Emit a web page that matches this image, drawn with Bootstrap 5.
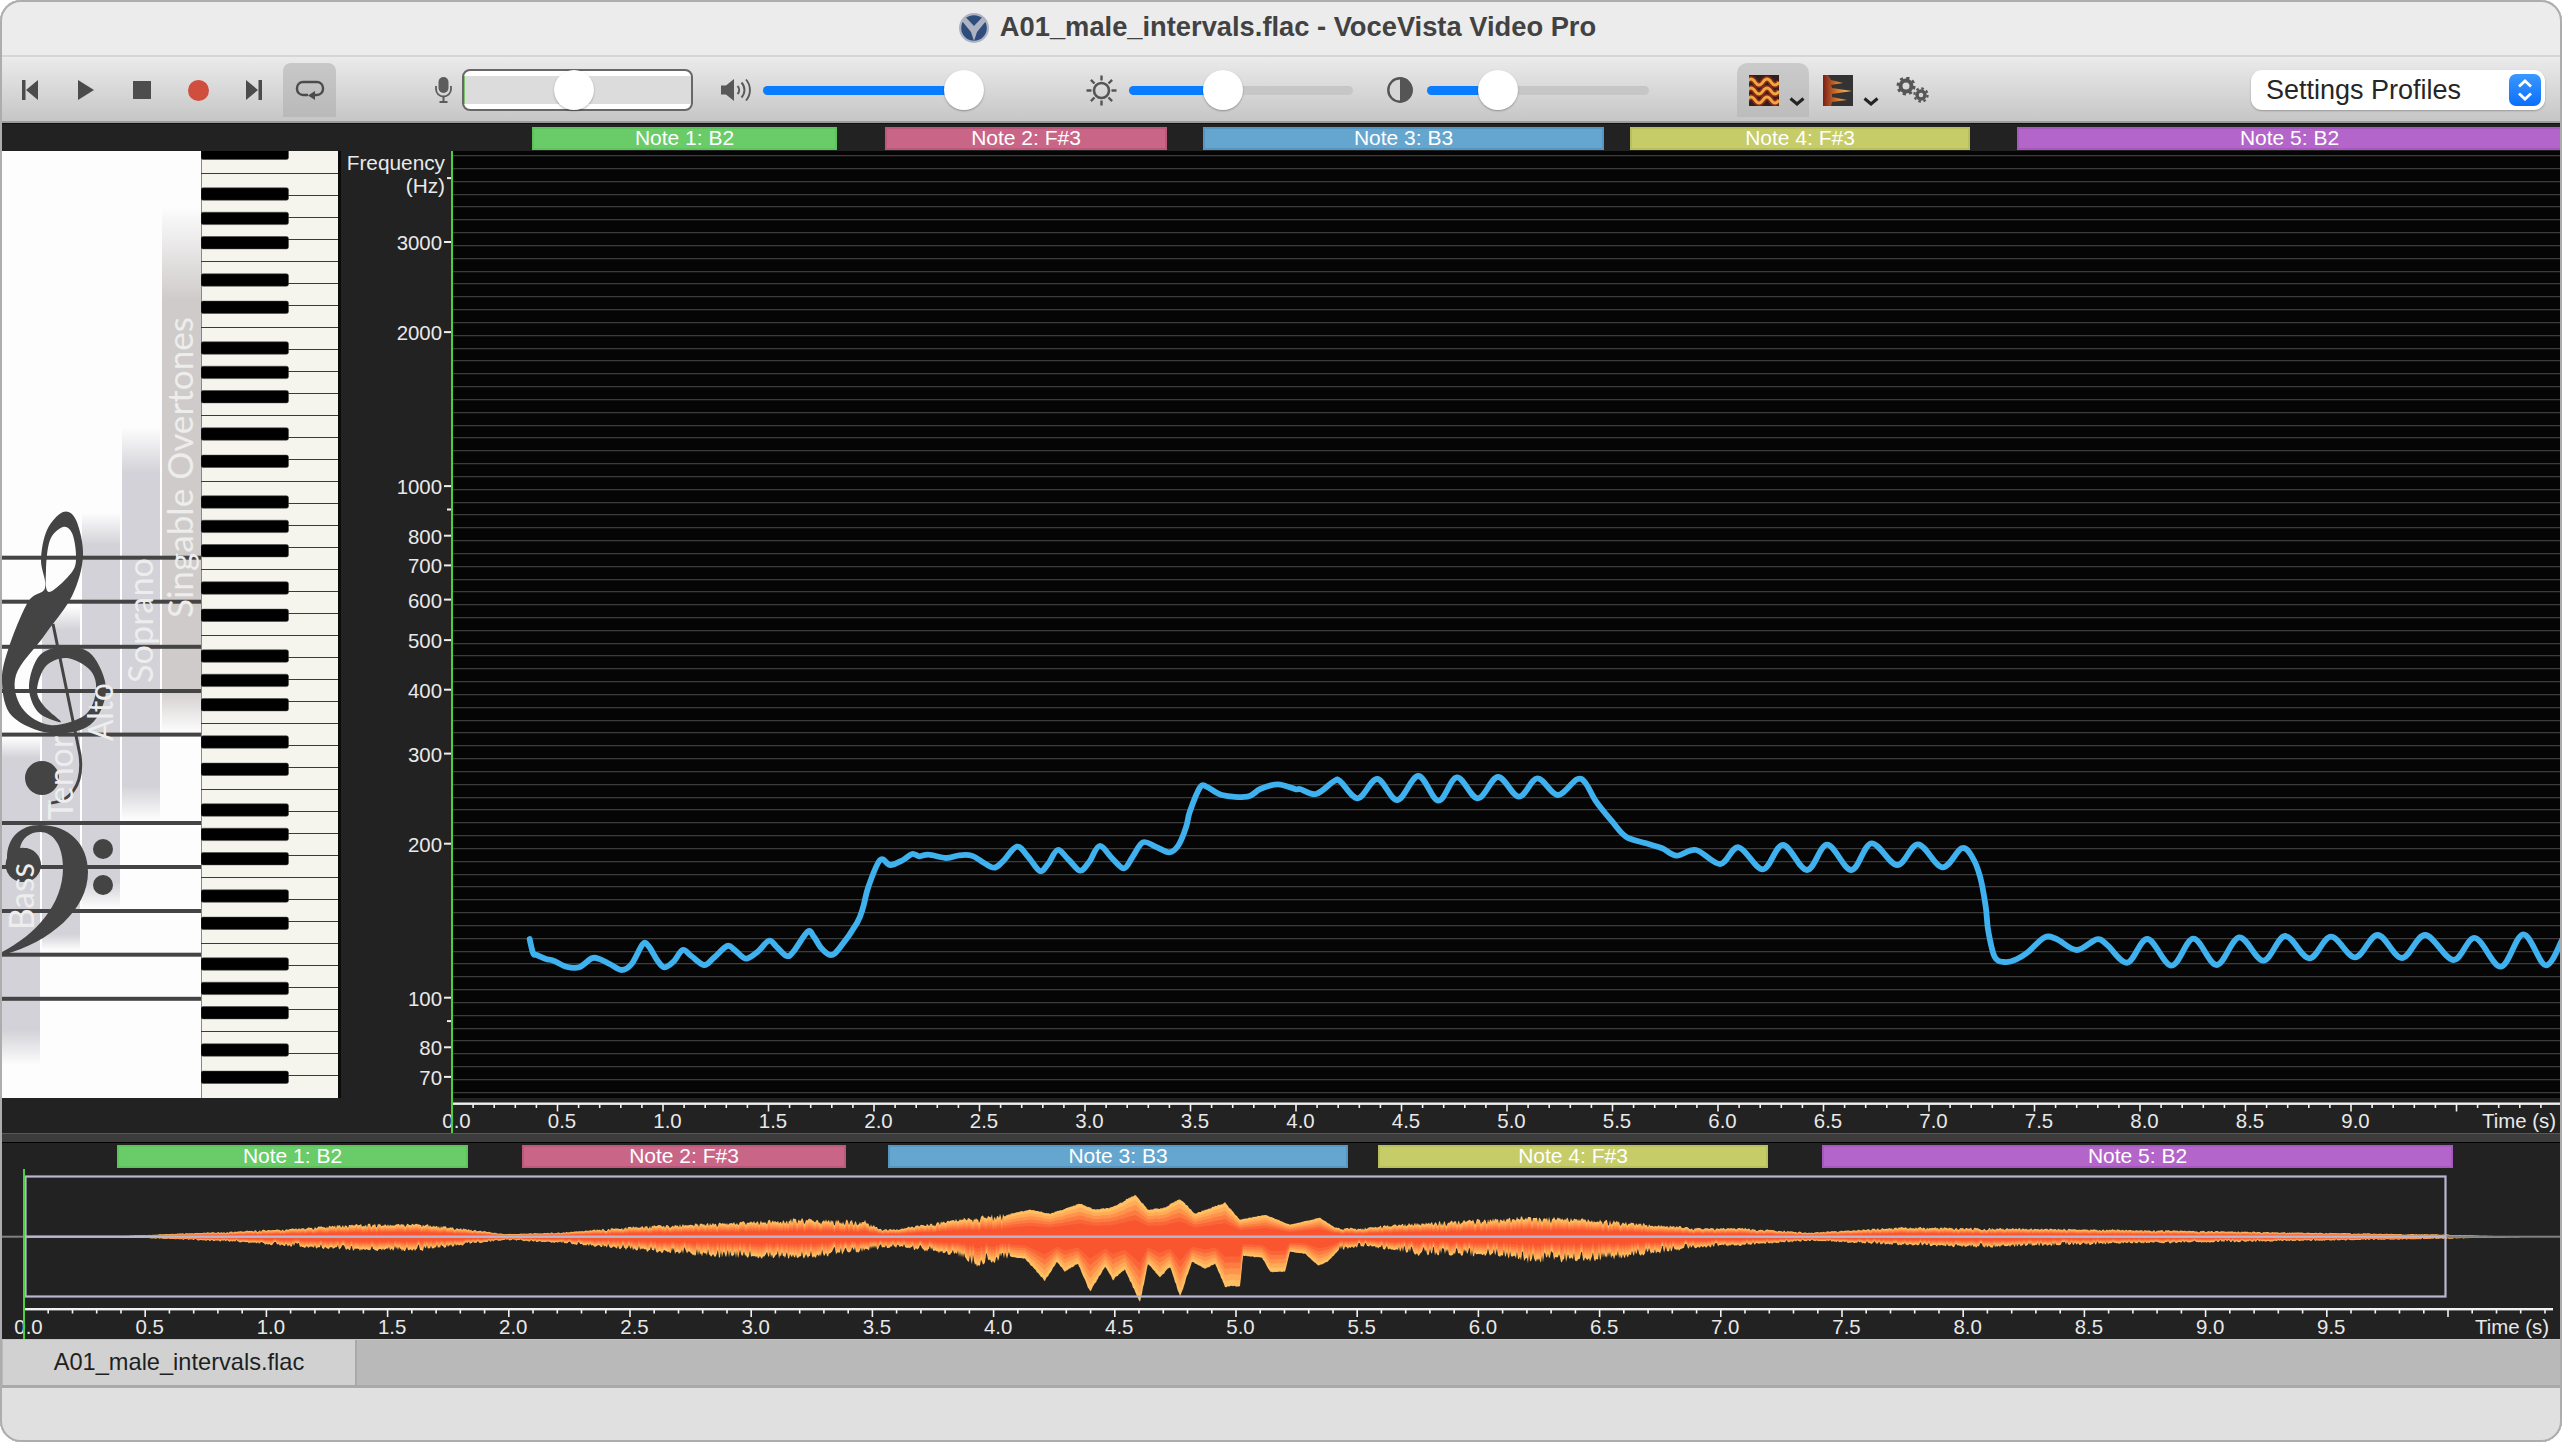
<!DOCTYPE html>
<html lang="en">
<head>
<meta charset="utf-8">
<title>A01_male_intervals.flac - VoceVista Video Pro</title>
<link rel="stylesheet" href="https://cdn.jsdelivr.net/npm/bootstrap@5.3.0/dist/css/bootstrap.min.css">
<style>
html,body{margin:0;width:2562px;height:1442px;background:#fff;overflow:hidden;font-family:"Liberation Sans",Arial,sans-serif}
.vv-win{width:2562px;height:1442px;border-radius:21px;overflow:hidden;position:relative;background:#222}
.vv-win::after{content:"";position:absolute;inset:0;border:2px solid #adadad;border-radius:21px;pointer-events:none}
.vv-title{height:57px;background:#ececec;border-bottom:2px solid #d6d6d6;color:#424242;font-size:27.300px;font-weight:700;padding-right:7px}
.vv-title svg{margin-right:11px}
.vv-tools{height:66px;background:linear-gradient(#ebebeb,#c6c6c6);border-bottom:2px solid #9c9c9c;padding-top:2px}
.tb-btn{line-height:0}
.tb-btn:active,.tb-btn:hover{border-color:transparent}
.m22{margin-left:22px}.m40{margin-left:40px}.m39{margin-left:39px}.m36{margin-left:36.5px}.m37{margin-left:37.5px}.m21{margin-left:21px}
.m99{margin-left:99px}.m10{margin-left:10px}.m28{margin-left:28px}.m102{margin-left:102px}.m12{margin-left:12px}.m34{margin-left:34px}.m14{margin-left:14px}.m88{margin-left:88px}.m17{margin-left:17px}
.tb-on{width:53px;height:54px;background:linear-gradient(#c8c8c8,#b9b9b9);border-radius:8px 8px 0 0}
.tb-view{height:54px;padding:12px 0 0;gap:10px}
.tb-view svg{flex:none}
.tb-on2{width:72px;background:linear-gradient(#cbcbcb,#bcbcbc);border-radius:10px 10px 0 0;padding-left:12px}
.tb-chev{margin-top:22px}
.vv-meter{width:231px;height:42px;border:2px solid #686868;border-radius:8px;background:#fff;padding:5px 0}
.vv-meterband{height:28px;background:#dcdcdc;border-left:1px solid #7cc46c}
.vv-sl{height:40px}
.w221{width:221px}.w224{width:224px}.w222{width:222px}
.vv-track{height:9px;background:#c6c6c6;border-radius:5px;top:15.5px}
.vv-fill{background:#0a7cff}
.vv-thumb{position:absolute;top:0;width:40px;height:40px;border-radius:50%;background:#fff;box-shadow:0 1px 2px rgba(0,0,0,.3)}
.vv-select{width:294px;margin-right:17px}
.vv-select .form-select{height:40px;border:0;border-radius:11px;background-image:none;padding:0 0 0 15px;font-size:27px;color:#262626;box-shadow:0 1px 2px rgba(0,0,0,.25);font-family:"Liberation Sans",Arial,sans-serif}
.vv-step{position:absolute;right:4px;top:4px}
.vv-lane{height:28px;background:#222;border-top:1px solid #111;padding-top:3px}
.vv-lane2{height:26px;background:#222;padding-top:2px}
.vv-chip{height:23px;border:2px solid;color:#fff;font-size:21px;line-height:18px;text-align:center;flex:none;white-space:nowrap;overflow:hidden}
.vv-n1{background:#6acb69;border-color:#5cc45a}
.vv-n2{background:#c96587;border-color:#bc587b}
.vv-n3{background:#65a6cf;border-color:#5796c2}
.vv-n4{background:#c5cc68;border-color:#b9c05b}
.vv-n5{background:#b365c9;border-color:#a758be}
.vv-plotrow{height:947px}
.vv-plotrow svg,.vv-strip svg{display:block}
.vv-strip{height:35px;background:#222}
.vv-split{height:10px;background:#3c3c3c;border-top:1px solid #585858;border-bottom:1px solid #000}
.vv-wave{height:170px;background:#222}
.vv-tabs{height:49px;background:#b9b9b9;border-bottom:3px solid #a9a9a9;border-top:1px solid #c4c4c4;padding-left:3px}
.vv-tab{width:354px;background:#d1d1d1;color:#1f1f1f;font-size:23.6px;border-right:2px solid #a9a9a9}
.vv-status{height:54px;background:#e0e0e0}
svg text{font-family:"Liberation Sans",Arial,sans-serif;font-size:20.400px;fill:#e9e9e9}
svg .vv-voice{font-family:Lato,"Open Sans",sans-serif;font-size:34px;font-weight:400;fill:#ededed}
svg .vv-fq{font-size:20.800px}
</style>
</head>
<body>
<div class="vv-win d-flex flex-column">
  <div class="vv-title d-flex align-items-center justify-content-center flex-none">
    <svg width="30" height="30" viewBox="-15 -15 30 30"><circle r="15" fill="#adb3c1"/><circle r="12.800" fill="#2f4d7c"/><polygon points="-12,-7 -8.500,-11 0,-2 8.500,-11 12,-7 3,4 0,13 -3,4" fill="#adb3c1"/></svg>
    <span>A01_male_intervals.flac - VoceVista Video Pro</span>
  </div>

  <div class="vv-tools d-flex align-items-center">
    <button class="btn tb-btn p-0 border-0 m22" aria-label="Previous"><svg width="16" height="20" viewBox="0 0 16 20"><rect width="3.500" height="20" fill="#4b4b4b"/><polygon points="16,0 16,20 4,10" fill="#4b4b4b"/></svg></button>
    <button class="btn tb-btn p-0 border-0 m40" aria-label="Play"><svg width="16" height="20" viewBox="0 0 16 20"><polygon points="0,0 0,20 16,10" fill="#4b4b4b"/></svg></button>
    <button class="btn tb-btn p-0 border-0 m39" aria-label="Stop"><svg width="18" height="18" viewBox="0 0 18 18"><rect width="18" height="18" fill="#4d4d4d"/></svg></button>
    <button class="btn tb-btn p-0 border-0 m36" aria-label="Record"><svg width="21" height="21" viewBox="0 0 21 21"><circle cx="10.500" cy="10.500" r="10.500" fill="#cf4e3e"/></svg></button>
    <button class="btn tb-btn p-0 border-0 m37" aria-label="Next"><svg width="16" height="20" viewBox="0 0 16 20"><polygon points="0,0 0,20 12,10" fill="#4b4b4b"/><rect x="12.500" width="3.500" height="20" fill="#4b4b4b"/></svg></button>
    <button class="btn tb-btn p-0 border-0 m21 tb-on d-flex align-items-center justify-content-center" aria-label="Loop"><svg width="30" height="20" viewBox="0 0 30 20"><path d="M13 15H8a6 6 0 0 1-6-6V8a6 6 0 0 1 6-6h14a6 6 0 0 1 6 6v1a6 6 0 0 1-6 6h-3" fill="none" stroke="#4b4b4b" stroke-width="2.400"/><polygon points="20,11 20,20 13,15.500" fill="#4b4b4b"/></svg></button>

    <svg class="m99" width="17" height="26" viewBox="0 0 17 26"><rect x="3.500" width="10" height="16" rx="5" fill="#5c5c5c"/><path d="M1 9v3a7.500 7.500 0 0 0 15 0V9" fill="none" stroke="#5c5c5c" stroke-width="1.800"/><path d="M8.500 19.500V25M4.500 25h8" stroke="#5c5c5c" stroke-width="2" fill="none"/></svg>
    <div class="vv-meter m10 position-relative"><div class="vv-meterband"></div><span class="vv-thumb" style="left:90px;top:-1px"></span></div>
    <svg class="m28" width="32" height="24" viewBox="0 0 32 24"><rect y="7.500" width="6" height="9" fill="#585858"/><polygon points="5,7.500 13,1 13,23 5,16.500" fill="#585858"/><path d="M16.500 8a5.500 5.500 0 0 1 0 8M20.500 4.500a11 11 0 0 1 0 15M25 1.500a16 16 0 0 1 0 21" fill="none" stroke="#585858" stroke-width="1.900"/></svg>
    <div class="vv-sl w221 m10 position-relative"><div class="progress vv-track position-absolute w-100"><div class="progress-bar vv-fill" style="width:201px"></div></div><span class="vv-thumb" style="left:181px"></span></div>

    <svg class="m102" width="31" height="31" viewBox="-15.500 -15.500 31 31"><circle r="7.500" fill="none" stroke="#555" stroke-width="2.600"/><g stroke="#555" stroke-width="2.400"><path d="M0-15V-10M0 10V15M-15 0H-10M10 0H15M-10.600-10.600L-7-7M7 7L10.600 10.600M-10.600 10.600L-7 7M7-7L10.600-10.600"/></g></svg>
    <div class="vv-sl w224 m12 position-relative"><div class="progress vv-track position-absolute w-100"><div class="progress-bar vv-fill" style="width:94px"></div></div><span class="vv-thumb" style="left:74px"></span></div>
    <svg class="m34" width="26" height="26" viewBox="-13 -13 26 26"><circle r="11.700" fill="#d6d6d6" stroke="#555" stroke-width="2.400"/><path d="M0-12.500a12.500 12.500 0 0 1 0 25z" fill="#555"/></svg>
    <div class="vv-sl w222 m14 position-relative"><div class="progress vv-track position-absolute w-100"><div class="progress-bar vv-fill" style="width:71px"></div></div><span class="vv-thumb" style="left:51px"></span></div>

    <button class="btn tb-btn border-0 m88 tb-view tb-on2 d-flex align-items-start" aria-label="Spectrogram view">
      <svg width="30" height="31" viewBox="0 0 30 31"><rect width="30" height="31" fill="#33201d"/><g fill="none"><g stroke="#8d2a1d" stroke-width="6"><path d="M-2 7q4-6 8 0t8 0 8 0 8 0"/><path d="M-2 16q4-6 8 0t8 0 8 0 8 0"/><path d="M-2 25q4-6 8 0t8 0 8 0 8 0"/></g><g stroke="#efa83c" stroke-width="3"><path d="M-2 7q4-6 8 0t8 0 8 0 8 0"/><path d="M-2 16q4-6 8 0t8 0 8 0 8 0"/><path d="M-2 25q4-6 8 0t8 0 8 0 8 0"/></g></g></svg>
      <svg class="tb-chev" width="16" height="9" viewBox="0 0 16 9"><path d="M1.500 1.500 8 7l6.500-5.500" fill="none" stroke="#232323" stroke-width="3"/></svg>
    </button>
    <button class="btn tb-btn border-0 m14 tb-view d-flex align-items-start" aria-label="Spectrum view">
      <svg width="30" height="31" viewBox="0 0 30 31"><defs><linearGradient id="fl" x1="0" x2="1" y1="0" y2="0"><stop offset="0" stop-color="#7a1f18"/><stop offset=".45" stop-color="#d0702a"/><stop offset="1" stop-color="#f6d070"/></linearGradient></defs><rect width="30" height="31" fill="#333"/><path d="M0 0H5L8 5 20 8 8 10 9 13 29 16 9 19 9 22 24 25 9 27 8 31H0Z" fill="url(#fl)"/></svg>
      <svg class="tb-chev" width="16" height="9" viewBox="0 0 16 9"><path d="M1.500 1.500 8 7l6.500-5.500" fill="none" stroke="#232323" stroke-width="3"/></svg>
    </button>
    <svg class="m17" width="33" height="26" viewBox="0 0 33 26"><g fill="none" stroke="#565656"><circle cx="10" cy="9" r="5.500" stroke-width="4"/><circle cx="10" cy="9" r="8.200" stroke-width="2.600" stroke-dasharray="3.200 3.240"/><circle cx="25" cy="18" r="4" stroke-width="3.400"/><circle cx="25" cy="18" r="6.600" stroke-width="2.200" stroke-dasharray="2.600 2.590"/></g></svg>

    <div class="vv-select ms-auto position-relative">
      <select class="form-select" aria-label="Settings Profiles"><option>Settings Profiles</option></select>
      <svg class="vv-step" width="32" height="32" viewBox="0 0 32 32"><defs><linearGradient id="st" x1="0" x2="0" y1="0" y2="1"><stop offset="0" stop-color="#3a98ff"/><stop offset="1" stop-color="#0a6ffc"/></linearGradient></defs><rect width="32" height="32" rx="7" fill="url(#st)"/><path d="M10 12.500 16 7l6 5.500M10 19.500 16 25l6-5.500" fill="none" stroke="#fff" stroke-width="2.800"/></svg>
    </div>
  </div>

  <div class="vv-lane d-flex">
    <div class="vv-chip vv-n1" style="margin-left:532px;width:305px">Note 1: B2</div>
    <div class="vv-chip vv-n2" style="margin-left:48px;width:282px">Note 2: F#3</div>
    <div class="vv-chip vv-n3" style="margin-left:36px;width:401px">Note 3: B3</div>
    <div class="vv-chip vv-n4" style="margin-left:26px;width:340px">Note 4: F#3</div>
    <div class="vv-chip vv-n5" style="margin-left:47px;width:545px">Note 5: B2</div>
  </div>

  <div class="vv-plotrow d-flex">
    <svg id="staff" width="201" height="947" viewBox="0 151 201 947"></svg>
    <svg id="piano" width="137" height="947" viewBox="201 151 137 947"></svg>
    <svg id="freq" width="115" height="947" viewBox="338 151 115 947"></svg>
    <svg id="plot" width="2109" height="947" viewBox="453 151 2109 947"></svg>
  </div>
  <div class="vv-strip"><svg id="t1" width="2562" height="35" viewBox="0 1098 2562 35"></svg></div>
  <div class="vv-split"></div>

  <div class="vv-lane2 d-flex">
    <div class="vv-chip vv-n1" style="margin-left:117px;width:351px">Note 1: B2</div>
    <div class="vv-chip vv-n2" style="margin-left:54px;width:324px">Note 2: F#3</div>
    <div class="vv-chip vv-n3" style="margin-left:42px;width:460px">Note 3: B3</div>
    <div class="vv-chip vv-n4" style="margin-left:30px;width:390px">Note 4: F#3</div>
    <div class="vv-chip vv-n5" style="margin-left:54px;width:631px">Note 5: B2</div>
  </div>
  <div class="vv-wave"><svg id="wave" class="d-block" width="2562" height="170" viewBox="0 1169 2562 170"></svg></div>

  <div class="vv-tabs d-flex">
    <div class="vv-tab d-flex align-items-center justify-content-center">A01_male_intervals.flac</div>
  </div>
  <div class="vv-status"></div>
</div>

<script src="https://cdn.jsdelivr.net/npm/bootstrap@5.3.0/dist/js/bootstrap.bundle.min.js"></script>
<script>
function f2(n){return n.toFixed(1)}
function spline(p,closed){
  var n=p.length,d='M'+f2(p[0][0])+' '+f2(p[0][1]);
  var m=closed?n:n-1;
  for(var i=0;i<m;i++){
    var a=closed?p[(i-1+n)%n]:p[Math.max(i-1,0)],b=p[i],c=p[(i+1)%n],e=closed?p[(i+2)%n]:p[Math.min(i+2,n-1)];
    d+='C'+f2(b[0]+(c[0]-a[0])/6)+' '+f2(b[1]+(c[1]-a[1])/6)+' '+f2(c[0]-(e[0]-b[0])/6)+' '+f2(c[1]-(e[1]-b[1])/6)+' '+f2(c[0])+' '+f2(c[1]);
  }
  return d+(closed?'Z':'');
}
/* ---------- staff panel ---------- */
(function(){
  var cols=[[162,39,207,300,688,732,'#cfcbca'],[122,38,427,473,786,820,'#d2d2d8'],[82,38,513,545,882,908,'#d2d2d8'],[42,38,607,630,934,950,'#d2d2d8'],[1,39,738,758,1030,1065,'#d2d2d8']];
  var s='<rect x="0" y="151" width="201" height="947" fill="#fdfdfd"/><defs>';
  cols.forEach(function(c,i){
    var a=c[2],b=c[5],h=b-a;
    s+='<linearGradient id="vc'+i+'" gradientUnits="userSpaceOnUse" x1="0" x2="0" y1="'+a+'" y2="'+b+'"><stop offset="0" stop-color="'+c[6]+'" stop-opacity="0"/><stop offset="'+((c[3]-a)/h)+'" stop-color="'+c[6]+'"/><stop offset="'+((c[4]-a)/h)+'" stop-color="'+c[6]+'"/><stop offset="1" stop-color="'+c[6]+'" stop-opacity="0"/></linearGradient>';
  });
  s+='</defs>';
  cols.forEach(function(c,i){s+='<rect x="'+c[0]+'" y="'+c[2]+'" width="'+c[1]+'" height="'+(c[5]-c[2])+'" fill="url(#vc'+i+')"/>'});
  [557.7,601.7,646.8,691,734.6,823,867,911,954.7,998.8].forEach(function(y){s+='<rect x="0" y="'+(y-2)+'" width="201" height="4" fill="#444"/>'});
  var treble=[[63,512],[76,520],[83,556],[72,596],[44,636],[16,675],[22,708],[50,725],[85,715],[96,690],[90,670],[67,658],[46,666],[37,690],[44,706],[61,722],[38,712],[29,686],[40,655],[67,647],[92,655],[106,690],[90,725],[50,733],[12,716],[2,683],[8,650],[28,602],[45,588],[41,560],[47,530]];
  var hole=[[63,527],[72,533],[76,555],[72,572],[49,592],[46,570],[50,540]];
  s+='<path fill-rule="evenodd" fill="#444" d="'+spline(treble,true)+spline(hole,true)+'"/>';
  s+='<path d="M53 624L80 755C84 785 70 803 48 803" fill="none" stroke="#444" stroke-width="3"/><circle cx="42" cy="778" r="17" fill="#444"/>';
  s+='<path fill="#444" d="M40 825C70 825 88 845 88 872C88 910 50 942 3 955L2 952C35 935 63 905 63 868C63 845 53 832 40 832C30 832 22 838 20 848A17 17 0 1 1 7 858C7 838 20 825 40 825Z"/><circle cx="24" cy="865" r="17" fill="#444"/><circle cx="103" cy="849" r="10" fill="#444"/><circle cx="103" cy="885" r="10" fill="#444"/>';
  [['Singable Overtones',192.6,618,301],['Soprano',152.7,683,125],['Alto',112.7,741,58],['Tenor',72.7,820,84],['Bass',33.5,930,67]].forEach(function(t){
    s+='<text class="vv-voice" textLength="'+t[3]+'" lengthAdjust="spacingAndGlyphs" transform="translate('+t[1]+' '+t[2]+') rotate(-90)">'+t[0]+'</text>';
  });
  document.getElementById('staff').innerHTML=s;
})();
/* ---------- piano ---------- */
(function(){
  var s='<rect x="201" y="151" width="137" height="947" fill="#f5f5ee"/><rect x="201" y="151" width="1" height="947" fill="#888"/>';
  for(var k=0;k<43;k++){var y=173.3+22*k;if(y<1097)s+='<rect x="201" y="'+Math.round(y)+'" width="137" height="1" fill="#3a3a3a"/>'}
  var off=[0,24.4,48.7,86,113.3];
  var bk=function(c){s+='<rect x="201" y="'+f2(c-6.2)+'" width="87.500" height="12.400" rx="2" fill="#000" stroke="#444" stroke-width=".5"/>'};
  bk(153.3);
  for(var o=0;o<6;o++)off.forEach(function(d){bk(194+154*o+d)});
  document.getElementById('piano').innerHTML=s;
})();
/* ---------- frequency axis ---------- */
function yf(f){return 997.7-154*Math.log2(f/100)}
(function(){
  var s='<rect x="338" y="151" width="3" height="947" fill="#0c0c0c"/>';
  s+='<text class="vv-fq" x="445" y="170" text-anchor="end">Frequency</text><text class="vv-fq" x="445" y="193" text-anchor="end">(Hz)</text>';
  [3000,2000,1000,800,700,600,500,400,300,200,100,80,70].forEach(function(f){
    var y=yf(f);
    s+='<rect x="444" y="'+f2(y-1)+'" width="7" height="2" fill="#eee"/><text x="442" y="'+f2(y+8)+'" text-anchor="end">'+f+'</text>';
  });
  [4000,900,90].forEach(function(f){s+='<rect x="447" y="'+f2(yf(f)-1)+'" width="4" height="2" fill="#eee"/>'});
  s+='<rect x="451" y="151" width="2" height="947" fill="#4ccf3c"/>';
  document.getElementById('freq').innerHTML=s;
})();
/* ---------- pitch plot ---------- */
(function(){
  var s='<rect x="453" y="151" width="2109" height="947" fill="#050505"/>';
  for(var k=-46;k<28;k++){var y=745.3+12.83*k;if(y>=152&&y<1097)s+='<rect x="453" y="'+Math.round(y)+'" width="2109" height="1.300" fill="#3b3b3b"/>'}
  var a=[58,597,65,640,72,645,90,657,105,662,130,680,155,682,180,655,195,657,215,672,238,690,258,672,280,612,292,620,308,660,322,682,340,665,358,630,375,648,400,675,418,655,445,618,460,630,482,656,505,635,527,602,542,620,562,648,575,635,603,575,615,590,630,625,648,645,665,625,700,548,712,500,722,440,745,360,765,375,790,360,808,342,822,349,840,344,875,354,900,346,925,347,945,365,968,383,985,365,1013,320,1035,350,1058,393,1075,370,1093,330,1115,360,1137,392,1155,365,1175,318,1200,355,1223,385,1240,350,1260,307,1285,320,1312,337,1330,315,1345,260,1352,215,1372,142,1385,140,1415,165,1465,170,1490,147,1525,133,1560,148];
  var b=[0,147,20,162,42,124,50,124,72,175,96,117,121,180,147,108,172,182,195,112,221,175,246,111,272,170,295,115,320,165,344,118,355,130,368,185,388,245,405,290,430,310,450,325,468,347,492,330,522,372,545,322,575,388,600,315,630,390,655,314,685,390,710,310,742,375,768,313,798,382,822,325,835,350,845,410,852,500,855,570,863,650,875,666,890,658,905,635,925,592,940,597,965,630,990,598,1003,615,1028,668,1053,597,1083,677,1110,596,1139,675,1167,592,1197,662,1224,588,1254,655,1281,590,1311,652,1339,585,1369,654,1398,585,1433,660,1460,594,1492,680,1520,583,1548,676,1570,590];
  var p=[],i;
  for(i=0;i<a.length;i+=2)p.push([500+a[i]/1.96,740+a[i+1]/3]);
  for(i=0;i<b.length;i+=2)p.push([1300+b[i]/1.2425,740+b[i+1]/3]);
  s+='<path d="'+spline(p,false)+'" fill="none" stroke="#3fb1ee" stroke-width="5.800" stroke-linejoin="round" stroke-linecap="round"/>';
  document.getElementById('plot').innerHTML=s;
})();
/* ---------- time axes ---------- */
function axis(x0,perSec,xEnd,y,base,maxLabel,timeEnd){
  var s='<rect x="'+x0+'" y="'+(y-1)+'" width="'+(xEnd-x0)+'" height="2.400" fill="#f0f0f0"/>';
  for(var k=0;;k++){
    var x=x0+perSec*k/10;if(x>=xEnd)break;
    s+='<rect x="'+f2(x-.8)+'" y="'+y+'" width="1.600" height="'+(k%5==0?8:4.500)+'" fill="#f0f0f0"/>';
    if(k%5==0&&k/10<=maxLabel)s+='<text x="'+f2(x+4.500)+'" y="'+base+'" text-anchor="middle">'+(k/10).toFixed(1)+'</text>';
  }
  s+='<text x="'+timeEnd+'" y="'+base+'" text-anchor="end">Time (s)</text>';
  return s;
}
document.getElementById('t1').innerHTML=axis(452,211,2562,1103.5,1128,9,2556)+'<rect x="451" y="1098" width="2" height="35" fill="#4ccf3c"/>';
/* ---------- waveform ---------- */
(function(){
  var up=[[110,0],[165,2.500],[235,5],[300,8],[360,12],[420,12],[470,7],[505,2.500],[560,4],[640,10],[720,13],[800,17],[865,15],[880,8],[895,7],[935,13],[960,17],[1000,21],[1030,27],[1050,23],[1080,33],[1095,27],[1112,29],[1135,42],[1148,27],[1165,29],[1180,38],[1195,23],[1225,34],[1240,17],[1265,22],[1290,12],[1320,19],[1335,9],[1361,8],[1400,12],[1480,16],[1525,19],[1600,16],[1700,8],[1745,8],[1810,4],[1900,9],[2100,7],[2300,4],[2445,2],[2480,1],[2520,.5]];
  var lo=[[110,0],[165,2],[235,5],[300,10],[360,13],[420,13],[470,7],[505,3],[560,6],[640,13],[720,19],[800,20],[855,15],[880,11],[900,10],[955,17],[975,27],[1010,20],[1025,22],[1045,44],[1057,25],[1065,35],[1078,27],[1090,55],[1105,30],[1113,43],[1125,33],[1140,66],[1148,27],[1160,41],[1170,30],[1180,60],[1192,25],[1205,32],[1215,27],[1225,50],[1240,50],[1243,19],[1262,21],[1270,35],[1285,35],[1290,15],[1305,17],[1318,29],[1328,25],[1340,12],[1365,9],[1420,17],[1500,18],[1525,24],[1600,22],[1700,10],[1745,8],[1810,4],[1900,8],[1980,10],[2100,7],[2300,4],[2445,2],[2480,1],[2520,.5]];
  function at(t,x){for(var i=1;i<t.length;i++)if(x<=t[i][0]){var a=t[i-1],b=t[i];return a[1]+(b[1]-a[1])*(x-a[0])/(b[0]-a[0])}return 0}
  function rnd(i){var v=Math.sin(i*12.9898)*43758.5453;return v-Math.floor(v)}
  var U=[],L=[],X=[];
  for(var x=110;x<=2520;x+=1){
    var u=at(up,x),l=at(lo,x),smooth=x>1010&&x<1340;
    u*=1+(smooth?.04:.22)*(rnd(x)-.5);
    l*=1+(smooth?.04:.26)*(rnd(x+7000)-.5);
    if(!smooth&&rnd(x+3000)>.8)l*=.68;
    if(!smooth&&rnd(x+5000)>.86)u*=.8;
    X.push(x);U.push(u);L.push(l);
  }
  var c=1236.7,s='';
  var lev=[[1,'#ffc063'],[.88,'#ffab57'],[.76,'#fe944b'],[.64,'#fc7c41'],[.52,'#fa6638'],[.4,'#f95630']];
  lev.forEach(function(v){
    var d='M'+X[0]+' '+c,i;
    for(i=0;i<X.length;i++)d+='L'+X[i]+' '+f2(c-U[i]*v[0]);
    for(i=X.length-1;i>=0;i--)d+='L'+X[i]+' '+f2(c+L[i]*v[0]);
    s+='<path d="'+d+'Z" fill="'+v[1]+'"/>';
  });
  s+='<rect x="0" y="1235.700" width="2562" height="2" fill="#808080"/>';
  s+='<rect x="25" y="1235.500" width="2420" height="2.400" fill="#b7b7cf"/>';
  s+='<rect x="25.500" y="1176.500" width="2420" height="120" fill="none" stroke="#b7b7cf" stroke-width="2.200"/>';
  s+=axis(24,242.4,2553,1309,1334,9.5,2549);
  s+='<rect x="23" y="1169" width="2" height="170" fill="#4ccf3c"/>';
  document.getElementById('wave').innerHTML=s;
})();
</script>
</body>
</html>
